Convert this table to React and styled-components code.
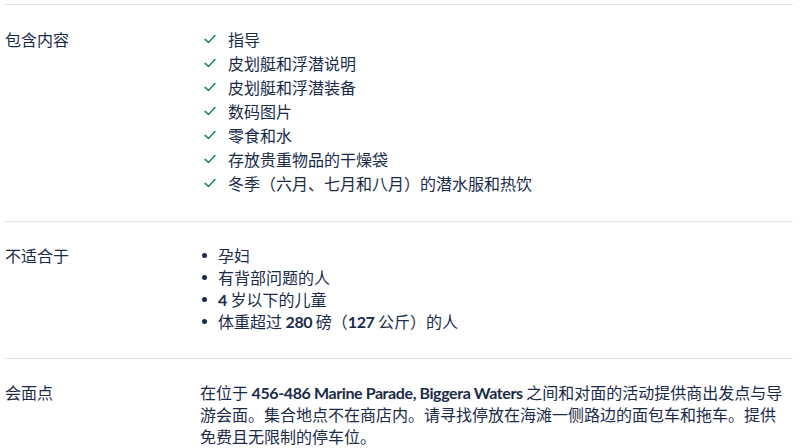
import React from "react";
import styled, { createGlobalStyle } from "styled-components";

const Global = createGlobalStyle`
  html, body { margin: 0; padding: 0; background: #ffffff; }
  body {
    font-family: "Noto Sans CJK SC", "Lato", sans-serif;
    color: #1a2b49;
    -webkit-font-smoothing: antialiased;
  }
`;

const Page = styled.div`
  width: 788px;
  padding: 4px 0 0 5px;
`;

const Section = styled.section`
  display: grid;
  grid-template-columns: 195px 1fr;
  border-top: 1px solid #dfe2e6;
  padding: 22px 0 26px;
`;

const Label = styled.div`
  font-size: 16px;
  line-height: ${(p) => p.$lh || 22}px;
  color: #1a2b49;
`;

const List = styled.ul`
  list-style: none;
  margin: 0;
  padding: 0;
`;

const Item = styled.li`
  display: flex;
  align-items: center;
  font-size: 16px;
  height: ${(p) => p.$lh}px;
  line-height: ${(p) => p.$lh}px;
  padding-left: ${(p) => p.$indent}px;
  gap: ${(p) => p.$gap}px;
`;

const Dot = styled.span`
  flex: none;
  width: 5px;
  height: 5px;
  border-radius: 50%;
  background: #1a2b49;
  margin-top: 1px;
`;

const Latin = styled.span`
  font-family: "Lato", sans-serif;
  font-weight: 700;
  letter-spacing: -0.4px;
  line-height: 1;
`;

const Para = styled.p`
  margin: 0;
  max-width: 584px;
  font-size: 16px;
  line-height: 22px;
`;

const Check = () => (
  <svg width="12" height="10" viewBox="0 0 12 10" style={{ flex: "none" }}>
    <path
      d="M1 5.2 L4.4 8.4 L11 1.6"
      fill="none"
      stroke="#16875f"
      strokeWidth="1.5"
      strokeLinecap="round"
      strokeLinejoin="round"
    />
  </svg>
);

const included = [
  "指导",
  "皮划艇和浮潜说明",
  "皮划艇和浮潜装备",
  "数码图片",
  "零食和水",
  "存放贵重物品的干燥袋",
  "冬季（六月、七月和八月）的潜水服和热饮",
];

export default function App() {
  return (
    <>
      <Global />
      <Page>
        <Section>
          <Label $lh={24}>包含内容</Label>
          <List>
            {included.map((t) => (
              <Item key={t} $lh={24} $indent={4} $gap={12}>
                <Check />
                <span>{t}</span>
              </Item>
            ))}
          </List>
        </Section>
        <Section>
          <Label>不适合于</Label>
          <List>
            <Item $lh={22} $indent={2} $gap={11}>
              <Dot />
              <span>孕妇</span>
            </Item>
            <Item $lh={22} $indent={2} $gap={11}>
              <Dot />
              <span>有背部问题的人</span>
            </Item>
            <Item $lh={22} $indent={2} $gap={11}>
              <Dot />
              <span>
                <Latin>4</Latin> 岁以下的儿童
              </span>
            </Item>
            <Item $lh={22} $indent={2} $gap={11}>
              <Dot />
              <span>
                体重超过 <Latin>280</Latin> 磅（<Latin>127</Latin> 公斤）的人
              </span>
            </Item>
          </List>
        </Section>
        <Section>
          <Label>会面点</Label>
          <Para>
            在位于 <Latin>456-486 Marine Parade, Biggera Waters</Latin>{" "}
            之间和对面的活动提供商出发点与导游会面。集合地点不在商店内。请寻找停放在海滩一侧路边的面包车和拖车。提供免费且无限制的停车位。
          </Para>
        </Section>
      </Page>
    </>
  );
}
